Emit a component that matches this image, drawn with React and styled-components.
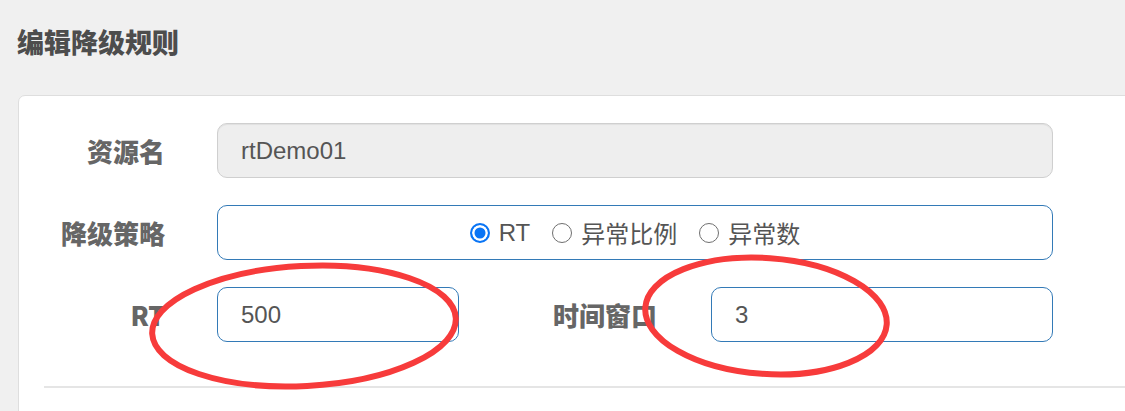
import React from "react";
import styled, { createGlobalStyle } from "styled-components";

const GlobalStyle = createGlobalStyle`
  html, body {
    margin: 0;
    padding: 0;
    background: #f0f0f0;
    overflow: hidden;
  }
  body {
    font-family: "Liberation Sans", "Noto Sans CJK SC", Arial, sans-serif;
  }
`;

const Page = styled.div`
  position: relative;
  width: 1125px;
  height: 411px;
  overflow: hidden;
  background: #f0f0f0;
`;

const Header = styled.div`
  padding: 26px 0 0 17px;
  height: 95px;
  box-sizing: border-box;
`;

const Title = styled.h4`
  margin: 0;
  font-size: 27px;
  line-height: 32px;
  font-weight: 900;
  color: #4d4d4d;
  font-family: "Noto Sans CJK SC", sans-serif;
`;

const Card = styled.div`
  margin-left: 18px;
  width: 1200px;
  background: #fff;
  border: 1px solid #dedede;
  border-radius: 7px 0 0 0;
  padding: 27px 0 0 26px;
  height: 400px;
  box-sizing: border-box;
`;

const Row = styled.div`
  display: flex;
  align-items: center;
  height: 55px;
  margin-bottom: 27px;
`;

const Label = styled.label`
  width: ${(p) => p.$w}px;
  margin-right: ${(p) => p.$gap}px;
  text-align: right;
  font-family: "Noto Sans CJK SC", sans-serif;
  font-size: 26px;
  font-weight: 900;
  color: #666;
  flex-shrink: 0;
  white-space: nowrap;
`;

const Field = styled.div`
  width: ${(p) => p.$w}px;
  height: 55px;
  box-sizing: border-box;
  border-radius: 10px;
  border: 1px solid ${(p) => (p.$disabled ? "#cfcfcf" : "#337ab7")};
  background: ${(p) => (p.$disabled ? "#eeeeee" : "#fff")};
  box-shadow: ${(p) => (p.$disabled ? "inset 0 1px 1px rgba(0,0,0,0.06)" : "none")};
  display: flex;
  align-items: center;
  justify-content: ${(p) => (p.$center ? "center" : "flex-start")};
  padding-left: ${(p) => (p.$center ? 0 : 23)}px;
  font-size: 24px;
  color: #555;
  flex-shrink: 0;
`;

const RadioItem = styled.label`
  display: flex;
  align-items: center;
  gap: 9px;
  margin-right: 22px;
  font-size: 24px;
  color: #555;
  font-family: "Liberation Sans", "Noto Sans CJK SC", sans-serif;
  &:last-child {
    margin-right: 0;
  }
`;

const Radio = styled.span`
  width: 20px;
  height: 20px;
  box-sizing: border-box;
  border-radius: 50%;
  border: ${(p) => (p.$checked ? "2px solid #0a75f5" : "1.5px solid #6f6f6f")};
  background: ${(p) => (p.$checked ? "#0a75f5" : "#fff")};
  box-shadow: ${(p) => (p.$checked ? "inset 0 0 0 2.5px #fff" : "none")};
  flex-shrink: 0;
`;

const Divider = styled.div`
  height: 2px;
  background: #e5e5e5;
  margin-top: 44px;
  margin-left: -1px;
`;

const Marks = styled.svg`
  position: absolute;
  left: 0;
  top: 0;
  pointer-events: none;
`;

const options = ["RT", "异常比例", "异常数"];

export default function App() {
  return (
    <Page>
      <GlobalStyle />
      <Header>
        <Title>编辑降级规则</Title>
      </Header>
      <Card>
        <Row>
          <Label $w={120} $gap={52}>资源名</Label>
          <Field $w={836} $disabled>rtDemo01</Field>
        </Row>
        <Row>
          <Label $w={120} $gap={52}>降级策略</Label>
          <Field $w={836} $center>
            {options.map((o, i) => (
              <RadioItem key={o}>
                <Radio $checked={i === 0} />
                {o}
              </RadioItem>
            ))}
          </Field>
        </Row>
        <Row>
          <Label $w={120} $gap={52}>RT</Label>
          <Field $w={242}>500</Field>
          <Label $w={198} $gap={54}>时间窗口</Label>
          <Field $w={342}>3</Field>
        </Row>
        <Divider />
      </Card>
      <Marks width="1125" height="411" viewBox="0 0 1125 411">
        <ellipse
          cx="304"
          cy="326"
          rx="152"
          ry="60"
          fill="none"
          stroke="#f73b3b"
          strokeWidth="6"
          transform="rotate(-3 304 326)"
        />
        <ellipse
          cx="766"
          cy="316"
          rx="121"
          ry="58"
          fill="none"
          stroke="#f73b3b"
          strokeWidth="6"
          transform="rotate(4 766 316)"
        />
      </Marks>
    </Page>
  );
}
